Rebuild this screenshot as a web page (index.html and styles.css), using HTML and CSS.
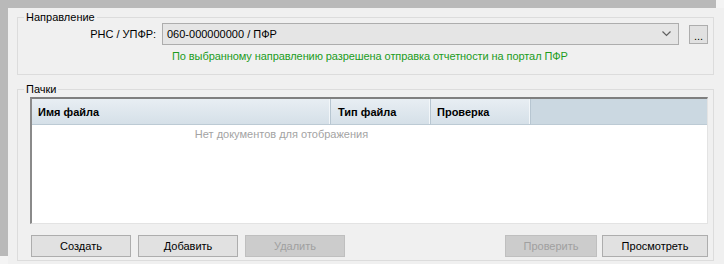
FILE: index.html
```html
<!DOCTYPE html>
<html lang="ru">
<head>
    <meta charset="UTF-8">
    <title>Отправка в ПФР</title>
    <link rel="stylesheet" href="styles.css">
</head>
<body>
    <div class="window">
        <fieldset class="group group-route">
            <legend>Направление</legend>
            <div class="route-row">
                <label class="route-label">РНС / УПФР:</label>
                <div class="combo">
                    <span class="combo-value">060-000000000 / ПФР</span>
                    <svg class="combo-arrow" width="9" height="6" viewBox="0 0 9 6">
                        <path d="M0.5 0.5 L4.5 4.5 L8.5 0.5" fill="none" stroke="#606060" stroke-width="1.2"/>
                    </svg>
                </div>
                <button class="dots-button">...</button>
            </div>
            <div class="route-status">По выбранному направлению разрешена отправка отчетности на портал ПФР</div>
        </fieldset>

        <fieldset class="group group-packs">
            <legend>Пачки</legend>
            <div class="grid">
                <div class="grid-header">
                    <div class="grid-col col-name">Имя файла</div>
                    <div class="grid-col col-type">Тип файла</div>
                    <div class="grid-col col-check">Проверка</div>
                    <div class="grid-rest"></div>
                </div>
                <div class="grid-body">
                    <div class="grid-empty">Нет документов для отображения</div>
                </div>
            </div>
            <div class="actions">
                <button class="win-button">Создать</button>
                <button class="win-button">Добавить</button>
                <button class="win-button" disabled>Удалить</button>
                <div class="spacer"></div>
                <button class="win-button btn-check" disabled>Проверить</button>
                <button class="win-button btn-view">Просмотреть</button>
            </div>
        </fieldset>
    </div>
</body>
</html>
```

FILE: styles.css
```css
body {
    margin: 0;
    background: #f4f4f4;
    font-family: 'Liberation Sans', Arial, sans-serif;
    font-size: 11px;
    color: #000;
    overflow: hidden;
}
.window {
    margin: 8px 0 0 8px;
    width: 716px;
    height: 256px;
    background: #f0f0f0;
    box-shadow: -8px -8px 0 #b9b9b9; /* grey frame behind the dialog */
    padding: 3px 10px 0 9px;
    box-sizing: border-box;
}
.group {
    margin: 0;
    border: 1px solid #dcdcdc;
    padding: 0;
}
.group legend {
    margin-left: 6px;
    padding: 0 2px 0 2px;
    line-height: 13px;
}
.group-route {
    height: 64px;
    box-sizing: border-box;
}
.route-row {
    display: flex;
    align-items: center;
    margin-top: -1px;
}
.route-label {
    width: 138px;
    text-align: right;
    margin-right: 6px;
}
.combo {
    width: 517px;
    height: 22px;
    box-sizing: border-box;
    border: 1px solid #adadad;
    background: #e5e5e5;
    display: flex;
    align-items: center;
    padding-left: 4px;
}
.combo-value {
    flex: 1;
}
.combo-arrow {
    margin-right: 7px;
}
.dots-button {
    margin-left: 10px;
    width: 19px;
    height: 19px;
    padding: 3px 0 0 0;
    border: 1px solid #adadad;
    background: #e1e1e1;
    font-family: 'Liberation Sans', Arial, sans-serif;
    font-size: 11px;
    color: #000;
}
.route-status {
    margin: 5px 0 0 154px;
    color: #1c9c1c;
    letter-spacing: -0.08px;
}
.group-packs {
    margin-top: 8px;
    height: 178px;
    box-sizing: border-box;
}
.grid {
    margin: 1px 5px 0 12px;
    height: 127px;
    background: #fff;
    border-top: 2px solid #7f7f7f;
    border-left: 2px solid #8a8a8a;
    border-right: 1px solid #e3e3e3;
    border-bottom: 1px solid #e3e3e3;
    box-sizing: border-box;
    display: flex;
    flex-direction: column;
}
.grid-header {
    display: flex;
    height: 26px;
    background: #cbd8e1;
}
.grid-col {
    box-sizing: border-box;
    background: linear-gradient(#e8eef3, #d5e0e8);
    border-right: 1px solid #b7c6d1;
    border-bottom: 1px solid #bccad4;
    box-shadow: inset -1px 0 0 #f2f6f9;
    font-weight: bold;
    padding: 7px 0 0 6px;
}
.col-name { width: 299px; }
.col-type { width: 100px; padding-left: 7px; }
.col-check { width: 100px; }
.grid-rest {
    flex: 1;
    border-bottom: 1px solid #bccad4;
}
.grid-body {
    flex: 1;
}
.grid-empty {
    width: 499px;
    text-align: center;
    color: #a3a3a3;
    padding-top: 3px;
}
.actions {
    display: flex;
    margin: 11px 5px 0 13px;
}
.spacer {
    flex: 1;
}
.win-button {
    width: 100px;
    height: 22px;
    margin-right: 7px;
    border: 1px solid #adadad;
    background: #e1e1e1;
    font-family: 'Liberation Sans', Arial, sans-serif;
    font-size: 11px;
    color: #000;
    padding: 0;
}
.win-button:disabled {
    background: #cccccc;
    border-color: #bfbfbf;
    color: #a0a0a0;
}
.btn-check {
    width: 92px;
    margin-right: 5px;
}
.btn-view {
    width: 106px;
    margin-right: 0;
}
```
